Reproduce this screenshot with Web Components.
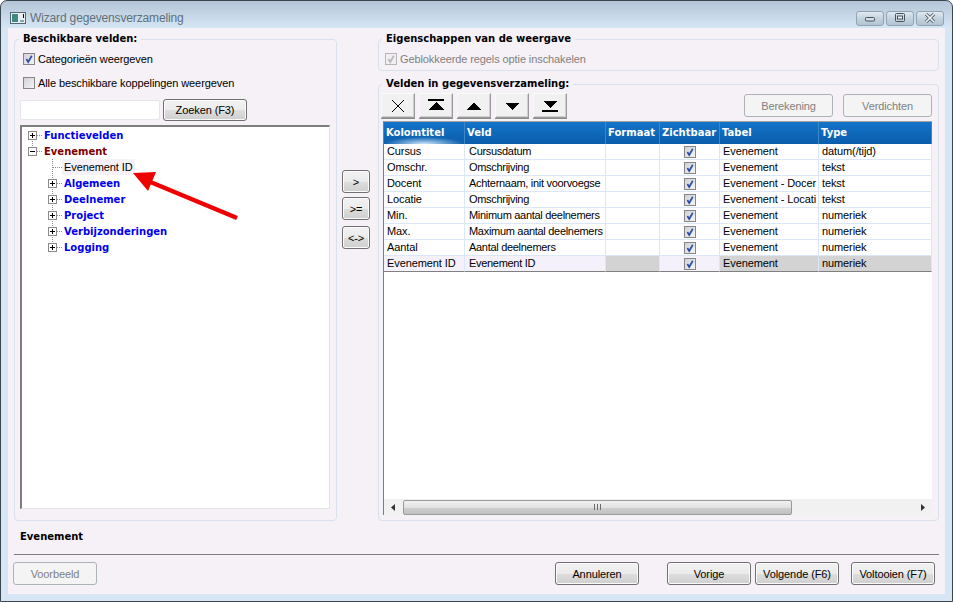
<!DOCTYPE html>
<html lang="nl">
<head>
<meta charset="utf-8">
<title>Wizard gegevensverzameling</title>
<style>
  html, body { margin: 0; padding: 0; background: #fff; }
  body { font: 11px "Liberation Sans", Arial, sans-serif; letter-spacing: -0.1px; color: #000; overflow: hidden; }
</style>
</head>
<body>
<wizard-window caption="Wizard gegevensverzameling">
  <div style="display:grid;grid-template-columns:323px 41px 561px;height:482px">
    <group-box caption="Beschikbare velden:" style="height:482px">
      <div style="padding:0 6px 0 5px">
        <check-row checked style="margin-left:3px">Categorieën weergeven</check-row>
        <check-row style="margin-left:3px">Alle beschikbare koppelingen weergeven</check-row>
        <div style="display:flex;gap:3px;margin-top:4px;align-items:center">
          <search-box></search-box>
          <win-button style="width:84px;height:22px">Zoeken (F3)</win-button>
        </div>
        <tree-view style="margin-top:4px">
          <tree-node level="1" state="plus" line-down kind="cat">Functievelden</tree-node>
          <tree-node level="1" state="minus" line-up kind="open">Evenement</tree-node>
          <tree-node level="2" state="leaf" line-down kind="leaf">Evenement ID</tree-node>
          <tree-node level="2" state="plus" line-down kind="cat">Algemeen</tree-node>
          <tree-node level="2" state="plus" line-down kind="cat">Deelnemer</tree-node>
          <tree-node level="2" state="plus" line-down kind="cat">Project</tree-node>
          <tree-node level="2" state="plus" line-down kind="cat">Verbijzonderingen</tree-node>
          <tree-node level="2" state="plus" kind="cat">Logging</tree-node>
        </tree-view>
      </div>
    </group-box>
    <div style="display:flex;flex-direction:column;padding:131px 0 0 5px">
      <win-button style="width:28px;height:23px">&gt;</win-button>
      <win-button style="width:28px;height:23px;margin-top:4px">&gt;=</win-button>
      <win-button style="width:28px;height:23px;margin-top:6px">&lt;-&gt;</win-button>
    </div>
    <div style="display:flex;flex-direction:column;gap:13px">
      <group-box caption="Eigenschappen van de weergave" style="height:32px" legend-left="3">
        <check-row checked disabled style="margin-left:6px">Geblokkeerde regels optie inschakelen</check-row>
      </group-box>
      <group-box caption="Velden in gegevensverzameling:" style="height:437px" legend-left="3">
        <div style="display:flex;margin:1px 6px 0 2px">
          <tool-button icon="x"></tool-button>
          <tool-button icon="top"></tool-button>
          <tool-button icon="up"></tool-button>
          <tool-button icon="down"></tool-button>
          <tool-button icon="bottom"></tool-button>
          <span style="flex:1"></span>
          <win-button disabled style="width:89px;margin-top:1px">Berekening</win-button>
          <win-button disabled style="width:89px;margin:1px 0 0 10px">Verdichten</win-button>
        </div>
        <data-grid style="margin:3px 6px 0 4px"></data-grid>
      </group-box>
    </div>
  </div>
  <status-line>Evenement</status-line>
  <div style="display:flex;padding:0 4px 0 0;margin:7px 0 0 -1px">
    <win-button disabled style="width:84px">Voorbeeld</win-button>
    <span style="flex:1"></span>
    <win-button style="width:84px">Annuleren</win-button>
    <win-button style="width:84px;margin-left:28px">Vorige</win-button>
    <win-button style="width:84px;margin-left:4px">Volgende (F6)</win-button>
    <win-button style="width:84px;margin-left:12px">Voltooien (F7)</win-button>
  </div>
</wizard-window>

<script>
const BOLD = `"DejaVu Sans", Verdana, sans-serif`;
const CHECK_FILL = `<defs><linearGradient id="cf" x1="0" y1="0" x2="1" y2="1"><stop offset="0" stop-color="#cfcfd4"/><stop offset="1" stop-color="#f6f6f8"/></linearGradient></defs>`;

class WizardWindow extends HTMLElement {
  constructor() {
    super();
    this.attachShadow({ mode: "open" });
  }
  connectedCallback() {
    const caption = this.getAttribute("caption") || "";
    this.shadowRoot.innerHTML = `
      <style>
        :host { display: block; width: 953px; height: 602px; }
        .frame {
          box-sizing: border-box; width: 953px; height: 602px;
          border: 1px solid #3b4750; border-radius: 7px 7px 0 0;
          background: linear-gradient(#b3c5d6 0, #d6e6f5 27px);
          display: flex; flex-direction: column;
        }
        .bar { height: 27px; display: flex; align-items: center; padding: 0 8px 0 9px; }
        .bar svg.icon { margin-top: 6px; }
        .cap { margin: 6px 0 0 4px; font-size: 12px; letter-spacing: -0.15px; color: #5f6f7a; }
        .btns { margin-left: auto; display: flex; gap: 2px; margin-top: 7px; }
        .btn {
          box-sizing: border-box; width: 28px; height: 15px; border: 1px solid #8fa3b3; border-radius: 3px;
          background: linear-gradient(#dfe9f2, #c3d2df 50%, #b2c4d3);
          display: flex; align-items: center; justify-content: center;
        }
        .client { flex: 1; margin: 0 7px 7px 7px; background: #f5f1f6; padding: 11px 6px 0 6px; }
      </style>
      <div class="frame">
        <div class="bar">
          <svg class="icon" width="16" height="12" viewBox="0 0 16 12">
            <rect x="0.5" y="0.5" width="15" height="11" fill="#e8eef2" stroke="#56666f"/>
            <rect x="2" y="2" width="6" height="8" fill="#3f8a83"/>
            <rect x="10" y="8" width="4" height="2" fill="#8ba3b0"/>
            <rect x="13" y="2" width="1" height="4" fill="#111"/>
          </svg>
          <span class="cap">${caption}</span>
          <div class="btns">
            <div class="btn"><svg width="12" height="8" viewBox="0 0 12 8"><rect x="1.5" y="3.5" width="9" height="3.5" rx="1" fill="#d5dee6" stroke="#46525c"/></svg></div>
            <div class="btn"><svg width="12" height="10" viewBox="0 0 12 10"><rect x="1.5" y="0.5" width="9" height="8" rx="1" fill="none" stroke="#46525c"/><rect x="3.5" y="3" width="5" height="3" fill="#eef3f7" stroke="#46525c" stroke-width="1"/></svg></div>
            <div class="btn"><svg width="12" height="10" viewBox="0 0 12 10"><path d="M2 1 L10 9 M10 1 L2 9" stroke="#56656f" stroke-width="3.4"/><path d="M2 1 L10 9 M10 1 L2 9" stroke="#f2f5f8" stroke-width="1.6"/></svg></div>
          </div>
        </div>
        <div class="client"><slot></slot></div>
      </div>
    `;
  }
}

class GroupBox extends HTMLElement {
  constructor() {
    super();
    this.attachShadow({ mode: "open" });
  }
  connectedCallback() {
    const caption = this.getAttribute("caption") || "";
    const left = this.getAttribute("legend-left") || "4";
    this.shadowRoot.innerHTML = `
      <style>
        :host { display: block; box-sizing: border-box; border: 1px solid #d9e2ec; border-radius: 4px; }
        .legend {
          display: block; width: fit-content; height: 14px; line-height: 14px;
          margin: -7px 0 0 ${left}px; padding: 0 4px; background: #f5f1f6;
          font: bold 10px ${BOLD}; letter-spacing: 0; color: #000; white-space: nowrap;
        }
      </style>
      <span class="legend">${caption}</span>
      <slot></slot>
    `;
  }
}

class CheckRow extends HTMLElement {
  constructor() {
    super();
    this.attachShadow({ mode: "open" });
  }
  connectedCallback() {
    const checked = this.hasAttribute("checked");
    const disabled = this.hasAttribute("disabled");
    const mark = disabled ? "#b8b8b8" : "#2c4fa8";
    this.shadowRoot.innerHTML = `
      <style>
        :host { display: flex; align-items: center; height: 24px; color: ${disabled ? "#7f7f7f" : "#000"}; white-space: nowrap; }
        svg { margin-right: 3px; flex: none; }
      </style>
      <svg width="12" height="12" viewBox="0 0 12 12">
        ${CHECK_FILL}
        <rect x="0.5" y="0.5" width="11" height="11" fill="${disabled ? "#f0eef0" : "url(#cf)"}" stroke="${disabled ? "#b5b5b5" : "#868686"}"/>
        ${checked ? `<path d="M3.4 6 L5.2 9 L8.8 2.8" fill="none" stroke="${mark}" stroke-width="1.7"/>` : ""}
      </svg>
      <slot></slot>
    `;
  }
}

class SearchBox extends HTMLElement {
  constructor() {
    super();
    this.attachShadow({ mode: "open" });
    this.shadowRoot.innerHTML = `
      <style>
        :host { display: block; box-sizing: border-box; width: 140px; height: 20px; background: #fff; border: 1px solid #e3e6ea; border-radius: 2px; }
      </style>
    `;
  }
}

class WinButton extends HTMLElement {
  constructor() {
    super();
    this.attachShadow({ mode: "open" });
  }
  connectedCallback() {
    const disabled = this.hasAttribute("disabled");
    this.shadowRoot.innerHTML = `
      <style>
        :host {
          display: flex; box-sizing: border-box; height: 23px; align-items: center; justify-content: center;
          border: 1px solid ${disabled ? "#adb2b5" : "#707070"}; border-radius: 3px;
          background: ${disabled ? "#f4f4f4" : "linear-gradient(#f2f2f2, #ebebeb 50%, #dddddd 52%, #cfcfcf)"};
          box-shadow: ${disabled ? "none" : "inset 0 0 0 1px #fbfbfb"};
          color: ${disabled ? "#7f7f7f" : "#000"}; white-space: nowrap; flex: none;
        }
      </style>
      <slot></slot>
    `;
  }
}

class ToolButton extends HTMLElement {
  constructor() {
    super();
    this.attachShadow({ mode: "open" });
  }
  connectedCallback() {
    const shapes = {
      x: `<path d="M5 3 L17 15 M17 3 L5 15" stroke="#000" stroke-width="1.1"/>`,
      top: `<rect x="3" y="2" width="16" height="2" fill="#000"/><path d="M3 13 H19 L11 5 Z" fill="#000"/>`,
      up: `<path d="M3.5 13 H18.5 L11 5.5 Z" fill="#000"/>`,
      down: `<path d="M3.5 5.5 H18.5 L11 13 Z" fill="#000"/>`,
      bottom: `<path d="M4 4 H18 L11 11 Z" fill="#000"/><rect x="3" y="13" width="16" height="2" fill="#000"/>`
    };
    this.shadowRoot.innerHTML = `
      <style>
        :host {
          display: flex; box-sizing: border-box; width: 34px; height: 25px; margin-right: 4px; align-items: center; justify-content: center;
          background: #f1f1f1; border: 1px solid; border-color: #fbfbfb #9a9a9a #9a9a9a #f8f8f8;
          box-shadow: inset -1px -1px 0 #cfcfcf, 0 1px 0 #8c8c8c; flex: none;
        }
      </style>
      <svg width="22" height="18" viewBox="0 0 22 18" shape-rendering="crispEdges">${shapes[this.getAttribute("icon")] || ""}</svg>
    `;
  }
}

class TreeView extends HTMLElement {
  constructor() {
    super();
    this.attachShadow({ mode: "open" });
    this.shadowRoot.innerHTML = `
      <style>
        :host {
          display: block; position: relative; box-sizing: border-box; width: 310px; height: 384px; background: #fff;
          border: 2px solid; border-color: #7e7e7e #e3e3e3 #e3e3e3 #7e7e7e; border-right-width: 1px; border-bottom-width: 1px;
        }
        .arrow { position: absolute; left: 108px; top: 43px; }
      </style>
      <slot></slot>
      <svg class="arrow" width="112" height="54" viewBox="0 0 112 54">
        <path d="M18 11 L107 48" stroke="#f00000" stroke-width="4.4" fill="none"/>
        <path d="M3 3 L26 2 L18 21 Z" fill="#f00000"/>
      </svg>
    `;
  }
}

class TreeNode extends HTMLElement {
  constructor() {
    super();
    this.attachShadow({ mode: "open" });
  }
  connectedCallback() {
    const level = parseInt(this.getAttribute("level") || "1", 10);
    const state = this.getAttribute("state");
    const kind = this.getAttribute("kind");
    const pad = level === 1 ? 2 : 22;
    const dots = `stroke="#8e8e8e" stroke-dasharray="1 1"`;
    let glyph = "";
    if (state === "leaf") {
      glyph = `<path d="M8.5 0 V16" ${dots} fill="none"/><path d="M9 8.5 H18" ${dots} fill="none"/>`;
    } else {
      const down = this.hasAttribute("line-down") ? `<path d="M8.5 12 V16" ${dots} fill="none"/>` : "";
      const up = (this.hasAttribute("line-up") || level === 2) ? `<path d="M8.5 0 V4" ${dots} fill="none"/>` : "";
      glyph = `${up}${down}<path d="M13 8.5 H18" ${dots} fill="none"/>
        <rect x="4.5" y="4.5" width="8" height="8" fill="#fff" stroke="#8a8a8a"/>
        <rect x="6" y="8" width="5" height="1" fill="#000"/>
        ${state === "plus" ? `<rect x="8" y="6" width="1" height="5" fill="#000"/>` : ""}`;
    }
    const color = { cat: "#0000f0", open: "#7d0000", leaf: "#000" }[kind] || "#000";
    this.shadowRoot.innerHTML = `
      <style>
        :host { display: flex; height: 16px; align-items: center; padding-left: ${pad}px; white-space: nowrap; }
        svg { flex: none; }
        .t { color: ${color}; }
        .cat, .open { font: bold 10px ${BOLD}; letter-spacing: 0; }
        .leaf { background: #f5f1f6; margin-left: -2px; padding: 0 2px; height: 16px; line-height: 16px; }
      </style>
      <svg width="20" height="16" viewBox="0 0 20 16" shape-rendering="crispEdges">${glyph}</svg>
      <span class="t ${kind}"><slot></slot></span>
    `;
  }
}

class DataGrid extends HTMLElement {
  constructor() {
    super();
    this.attachShadow({ mode: "open" });
  }
  connectedCallback() {
    const columns = ["Kolomtitel", "Veld", "Formaat", "Zichtbaar", "Tabel", "Type"];
    const rows = [
      ["Cursus", "Cursusdatum", "Evenement", "datum(/tijd)"],
      ["Omschr.", "Omschrijving", "Evenement", "tekst"],
      ["Docent", "Achternaam, init voorvoegse", "Evenement - Docer", "tekst"],
      ["Locatie", "Omschrijving", "Evenement - Locati", "tekst"],
      ["Min.", "Minimum aantal deelnemers", "Evenement", "numeriek"],
      ["Max.", "Maximum aantal deelnemers", "Evenement", "numeriek"],
      ["Aantal", "Aantal deelnemers", "Evenement", "numeriek"],
      ["Evenement ID", "Evenement ID", "Evenement", "numeriek"]
    ];
    const check = `<svg width="12" height="12" viewBox="0 0 12 12">
      ${CHECK_FILL}
      <rect x="0.5" y="0.5" width="11" height="11" fill="url(#cf)" stroke="#868686"/>
      <path d="M3.4 6 L5.2 9 L8.8 2.8" fill="none" stroke="#2c4fa8" stroke-width="1.7"/></svg>`;
    const head = columns.map((c, i) => `<div class="h${i === 0 ? " first" : ""}">${c}</div>`).join("");
    const body = rows.map((r, i) => {
      const s = i === rows.length - 1 ? " sel" : "";
      return `<div class="c${s} lav">${r[0]}</div><div class="c${s} lav veld">${r[1]}</div>
        <div class="c${s} gray"></div><div class="c${s} lav mid">${check}</div>
        <div class="c${s} gray">${r[2]}</div><div class="c${s} gray">${r[3]}</div>`;
    }).join("");
    this.shadowRoot.innerHTML = `
      <style>
        :host {
          display: flex; flex-direction: column; box-sizing: border-box; width: 549px; height: 394px; background: #fff;
          border-left: 1px solid #7e7e7e; border-top: 1px solid #a0a0a0;
        }
        .grid { display: grid; grid-template-columns: 81px 141px 54px 60px 99px 113px; grid-template-rows: 22px repeat(8, 16px); flex: 1; align-content: start; }
        .h {
          height: 22px; box-sizing: border-box; padding: 0 2px; color: #fff; letter-spacing: 0;
          font: bold 10px/22px ${BOLD}; white-space: nowrap; overflow: hidden;
          background: linear-gradient(#1374c9, #0a5dab); border-right: 1px solid #3f86c6;
        }
        .h.first { background: radial-gradient(ellipse 40px 7px at 50% 100%, #cfe6fb, rgba(120,180,235,0) 100%), linear-gradient(#1374c9, #0a5dab); }
        .c {
          box-sizing: border-box; height: 16px; line-height: 15px; padding: 0 0 0 3px; white-space: nowrap; overflow: hidden;
          border-right: 1px solid #dbe7f8; border-bottom: 1px solid #dbe7f8;
        }
        .veld { padding-left: 4px; letter-spacing: -0.3px; }
        .mid { display: flex; align-items: center; justify-content: center; padding: 0; }
        .sel { border-bottom: 1px solid #808080; }
        .sel.lav { background: #f4f1fb; }
        .sel.gray { background: #d3d3d3; }
        .bar { display: flex; height: 16px; background: #f1f1f1; align-items: center; }
        .arrowbtn { width: 19px; height: 16px; display: flex; align-items: center; justify-content: center; flex: none; }
        .thumb {
          width: 389px; height: 15px; box-sizing: border-box; border: 1px solid #9a9a9a; border-radius: 2px; flex: none;
          background: linear-gradient(#f1f1f1, #e2e2e2 50%, #cfcfcf 52%, #c0c0c0);
          display: flex; align-items: center; justify-content: center;
        }
        .grip { width: 7px; height: 6px; background: repeating-linear-gradient(90deg, #6d6d6d 0 1px, transparent 1px 3px); }
      </style>
      <div class="grid">${head}${body}</div>
      <div class="bar">
        <div class="arrowbtn"><svg width="5" height="7" viewBox="0 0 5 7"><path d="M4 0 V7 L0 3.5 Z" fill="#333"/></svg></div>
        <div class="thumb"><div class="grip"></div></div>
        <span style="flex:1"></span>
        <div class="arrowbtn"><svg width="5" height="7" viewBox="0 0 5 7"><path d="M1 0 V7 L5 3.5 Z" fill="#333"/></svg></div>
      </div>
    `;
  }
}

class StatusLine extends HTMLElement {
  constructor() {
    super();
    this.attachShadow({ mode: "open" });
    this.shadowRoot.innerHTML = `
      <style>
        :host {
          display: block; box-sizing: border-box; height: 34px; padding: 9px 0 0 6px;
          border-bottom: 1px solid #7d7d7d; font: bold 10px/14px ${BOLD}; letter-spacing: 0;
        }
      </style>
      <slot></slot>
    `;
  }
}

customElements.define("wizard-window", WizardWindow);
customElements.define("group-box", GroupBox);
customElements.define("check-row", CheckRow);
customElements.define("search-box", SearchBox);
customElements.define("win-button", WinButton);
customElements.define("tool-button", ToolButton);
customElements.define("tree-view", TreeView);
customElements.define("tree-node", TreeNode);
customElements.define("data-grid", DataGrid);
customElements.define("status-line", StatusLine);
</script>
</body>
</html>
